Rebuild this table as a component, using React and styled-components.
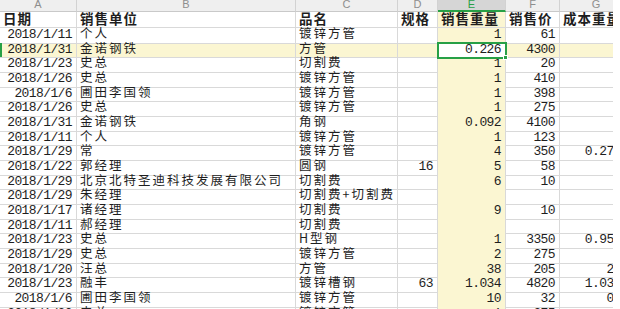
import React from "react";
import styled, { createGlobalStyle } from "styled-components";

const GlobalStyle = createGlobalStyle`
  html, body { margin: 0; padding: 0; background: #ffffff; }
  #root { width: 620px; height: 309px; overflow: hidden; }
`;

const COLS = "77px 219px 102px 40px 68px 54px 73px";
const YELLOW = "#fbf6d2";
const GREEN = "#27a046";
const GRID = "#d9d9d9";

const Viewport = styled.div`
  width: 613px;
  height: 309px;
  overflow: hidden;
  background: #fff;
`;

const Sheet = styled.div`
  width: 633px;
  display: flex;
  flex-direction: column;
`;

const Row = styled.div`
  display: grid;
  grid-template-columns: ${COLS};
  height: ${(p) => p.$h};
  background: ${(p) => (p.$active ? YELLOW : "transparent")};
`;

const Letter = styled.div`
  background: ${(p) => (p.$sel ? "#d6d6d6" : "#efefef")};
  color: ${(p) => (p.$sel ? GREEN : "#8e8e8e")};
  border-right: 1px solid #d2d2d2;
  border-bottom: ${(p) => (p.$sel ? `2px solid ${GREEN}` : "1px solid #c9c9c9")};
  box-sizing: border-box;
  font-family: "Liberation Sans", Arial, sans-serif;
  font-size: 11px;
  line-height: 8px;
  text-align: center;
  overflow: hidden;
`;

const Cell = styled.div`
  position: relative;
  box-sizing: border-box;
  border-right: 1px solid ${GRID};
  border-bottom: 1px solid ${GRID};
  background: ${(p) => (p.$sel ? "#fff" : p.$hl ? YELLOW : "transparent")};
  box-shadow: ${(p) => (p.$edge ? `inset 2px 0 0 ${GREEN}` : "none")};
  outline: ${(p) => (p.$sel ? `2px solid ${GREEN}` : "none")};
  outline-offset: -1px;
  z-index: ${(p) => (p.$sel ? 2 : 0)};
  padding: 0 ${(p) => (p.$num ? "4px" : "2px")} 0 ${(p) => (p.$num ? "2px" : "3px")};
  text-align: ${(p) => (p.$num ? "right" : "left")};
  white-space: nowrap;
  overflow: visible;
  color: #1e1e1e;
  font-family: ${(p) =>
    p.$num
      ? `"Liberation Mono", "Noto Sans CJK SC", monospace`
      : `"Noto Sans CJK SC", "Noto Sans", sans-serif`};
  font-size: ${(p) => (p.$num ? "13px" : p.$bold ? "13.5px" : "12.5px")};
  letter-spacing: ${(p) => (p.$num ? "-0.6px" : p.$bold ? "1px" : "2px")};
  font-weight: ${(p) => (p.$bold ? 700 : 400)};
  line-height: ${(p) => p.$lh};
`;

const Handle = styled.span`
  position: absolute;
  right: -3px;
  bottom: -3px;
  width: 5px;
  height: 5px;
  background: ${GREEN};
  border: 1px solid #fff;
  box-sizing: border-box;
`;

const letters = ["A", "B", "C", "D", "E", "F", "G"];
const heads = ["日期", "销售单位", "品名", "规格", "销售重量", "销售价", "成本重量"];

const rows = [
  ["2018/1/11", "个人", "镀锌方管", "", "1", "61", ""],
  ["2018/1/31", "金诺钢铁", "方管", "", "0.226", "4300", ""],
  ["2018/1/23", "史总", "切割费", "", "1", "20", ""],
  ["2018/1/26", "史总", "镀锌方管", "", "1", "410", ""],
  ["2018/1/6", "圃田李国领", "镀锌方管", "", "1", "398", ""],
  ["2018/1/26", "史总", "镀锌方管", "", "1", "275", ""],
  ["2018/1/31", "金诺钢铁", "角钢", "", "0.092", "4100", ""],
  ["2018/1/11", "个人", "镀锌方管", "", "1", "123", ""],
  ["2018/1/29", "常", "镀锌方管", "", "4", "350", "0.2772"],
  ["2018/1/22", "郭经理", "圆钢", "16", "5", "58", ""],
  ["2018/1/29", "北京北特圣迪科技发展有限公司", "切割费", "", "6", "10", ""],
  ["2018/1/29", "朱经理", "切割费+切割费", "", "", "", ""],
  ["2018/1/17", "诸经理", "切割费", "", "9", "10", ""],
  ["2018/1/11", "郝经理", "切割费", "", "", "", ""],
  ["2018/1/23", "史总", "H型钢", "", "1", "3350", "0.9548"],
  ["2018/1/29", "史总", "镀锌方管", "", "2", "275", ""],
  ["2018/1/20", "汪总", "方管", "", "38", "205", "2.6"],
  ["2018/1/23", "融丰", "镀锌槽钢", "63", "1.034", "4820", "1.0342"],
  ["2018/1/6", "圃田李国领", "镀锌方管", "", "10", "32", "0.6"],
  ["2018/1/20", "史总", "镀锌方管", "", "1", "275", ""],
];

const numCols = [true, false, false, true, true, true, true];
const ROW_H = "14.68px";
const TEXT_LH = "10.7px";

export default function App() {
  return (
    <Viewport>
      <GlobalStyle />
      <Sheet>
        <Row $h="12px">
          {letters.map((l, i) => (
            <Letter key={l} $sel={i === 4}>
              {l}
            </Letter>
          ))}
        </Row>
        <Row $h="16px">
          {heads.map((h, i) => (
            <Cell key={h} $bold $hl={i === 4} $lh="12px">
              {h}
            </Cell>
          ))}
        </Row>
        {rows.map((r, ri) => {
          const active = ri === 1;
          return (
            <Row key={ri} $h={ROW_H} $active={active}>
              {r.map((v, ci) => {
                const sel = active && ci === 4;
                const num = numCols[ci];
                return (
                  <Cell
                    key={ci}
                    $num={num}
                    $hl={ci === 4}
                    $sel={sel}
                    $edge={active && ci === 0}
                    $lh={num ? ROW_H : TEXT_LH}
                  >
                    {v}
                    {sel && <Handle />}
                  </Cell>
                );
              })}
            </Row>
          );
        })}
      </Sheet>
    </Viewport>
  );
}
